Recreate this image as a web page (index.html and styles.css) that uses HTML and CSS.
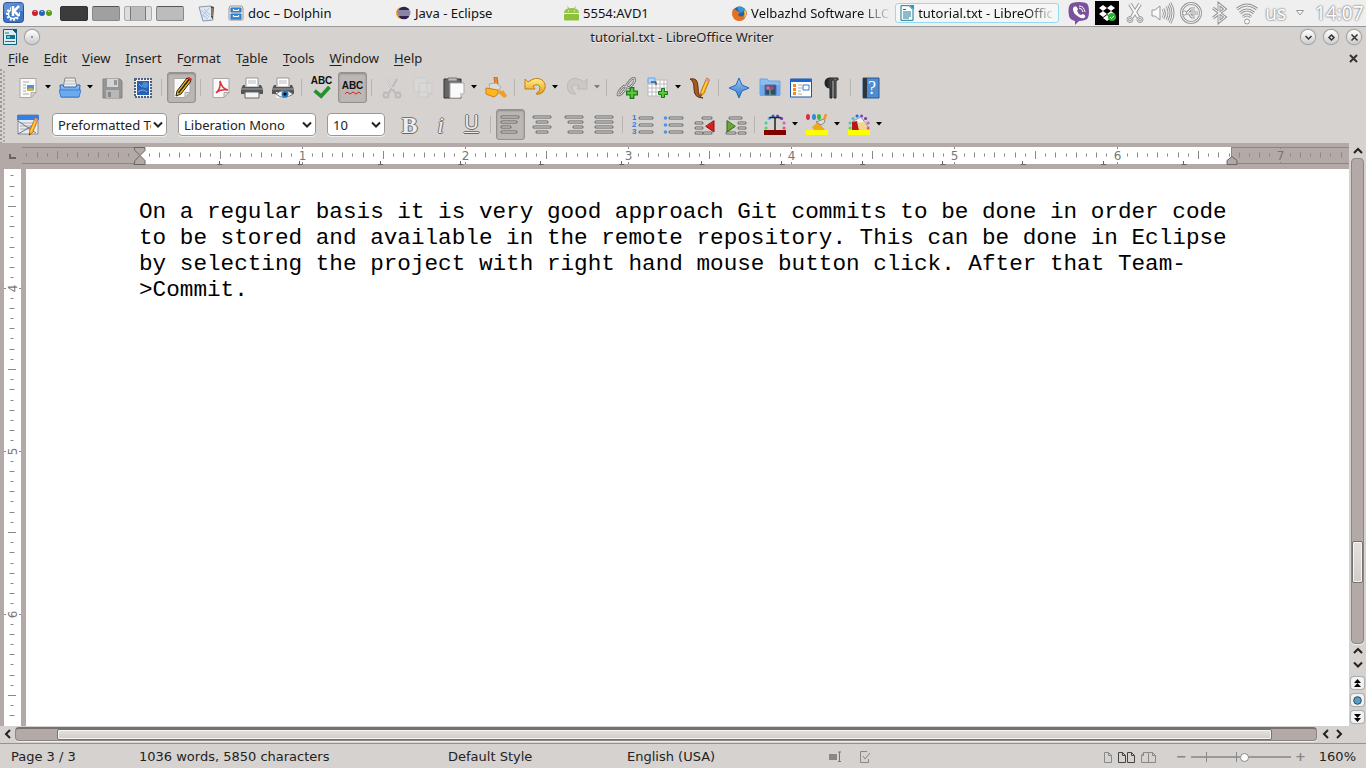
FILE: index.html
```
<!DOCTYPE html>
<html lang="en">
<head>
<meta charset="utf-8">
<title>tutorial.txt - LibreOffice Writer</title>
<link rel="stylesheet" href="styles.css">
</head>
<body>
<svg class="defs" aria-hidden="true">
  <defs>
    <linearGradient id="blue" x2="0" y2="1"><stop offset="0" stop-color="#9cc8f5"/><stop offset="1" stop-color="#2f76c8"/></linearGradient>
    <linearGradient id="gold" x2="0" y2="1"><stop offset="0" stop-color="#fff08a"/><stop offset="1" stop-color="#e89a10"/></linearGradient>
    <linearGradient id="dark" x2="1"><stop offset="0" stop-color="#111"/><stop offset="1" stop-color="#888"/></linearGradient>
    <symbol id="page" viewBox="0 0 22 22"><path d="M3 1.5h16v14l-5 5H3z" fill="#fafafa" stroke="#a8a8a8"/><path d="M14 20.5v-5h5z" fill="#d8d8d8" stroke="#aaa"/></symbol>
    <symbol id="wheel" viewBox="0 0 22 22"><g stroke-width="3" stroke-linecap="round"><path d="M2 14h.1" stroke="#58d850"/><path d="M2 9h.1" stroke="#38d0b0"/><path d="M5 4.500h.1" stroke="#50b8f0"/><path d="M9 2h.1" stroke="#2868e0"/><path d="M13.500 2h.1" stroke="#6050c8"/><path d="M17.500 4.500h.1" stroke="#7838b0"/><path d="M20 9h.1" stroke="#d060c0"/><path d="M20 14h.1" stroke="#e85070"/></g></symbol>
    <symbol id="plus" viewBox="0 0 10 10"><path d="M3.500.5h3v3h3v3h-3v3h-3v-3h-3v-3h3z" fill="#58c838" stroke="#187818"/></symbol>
    <symbol id="pencil" viewBox="0 0 12 22"><path d="M8 1l3 2-6 15-4 3 .5-5z" fill="#ffb414" stroke="#b87010"/><path d="M8 1l3 2-1 2.500-3-1.500z" fill="#f09090"/><path d="M1 21l.3-2 1.500.8z" fill="#222"/><path d="M8 5L3 17" stroke="#ffe070"/></symbol>
    <symbol id="down" viewBox="0 0 8 5"><path d="M1 0h6L4 3.500z"/></symbol>
    <symbol id="chev" viewBox="0 0 10 8"><path d="M1 1.500l4 4 4-4" fill="none" stroke="#222" stroke-width="2"/></symbol>
  </defs>
</svg>

<header class="panel">
  <button class="kmenu" aria-label="Application launcher"><svg width="21" height="22" viewBox="0 0 21 22"><rect x=".5" y=".5" width="20" height="20" rx="3" fill="#3b73c4" stroke="#2a5298"/><path d="M1 2q9-3 19 0v7Q10 9 1 12z" fill="#6d9cdc" opacity=".7"/><circle cx="10" cy="12" r="6" fill="none" stroke="#fff" stroke-width="2" stroke-dasharray="2 1.500"/><circle cx="10" cy="12" r="4.500" fill="none" stroke="#fff" stroke-width="1.500"/><path d="M8 3l8-1v13H8z" fill="#4c82cc"/><path d="M10 4v10M16 4l-5 5 5 5" fill="none" stroke="#fff" stroke-width="2.500"/></svg></button>
  <svg class="dots" width="20" height="8" viewBox="0 0 20 8"><circle cx="3" cy="4" r="3" fill="#c8202c"/><circle cx="10" cy="4" r="3" fill="#2864b4"/><circle cx="17" cy="4" r="3" fill="#5c9c10"/><path d="M2 2.500h2m5 0h2m5 0h2" stroke="#fff" opacity=".6"/></svg>
  <nav class="pager" aria-label="Desktops"><button class="desk current" aria-label="Desktop 1"></button><button class="desk" aria-label="Desktop 2"></button><button class="desk split" aria-label="Desktop 3"></button><button class="desk light" aria-label="Desktop 4"></button></nav>
  <svg class="notes" width="18" height="17" viewBox="0 0 18 17"><path d="M1 2l12-1 2 14-10 1z" fill="#dfe9f4" stroke="#8a96a4"/><path d="M3 5l8 7M3 9l7 5M6 4l6 6M11 3L4 12" stroke="#a9c4e4"/><path d="M13 1l3 1-1 12-2-2z" fill="#504840"/><path d="M14 3v8" stroke="#c0a468"/></svg>
  <nav class="tasks" aria-label="Windows">
    <button class="task"><svg width="16" height="16" viewBox="0 0 16 16"><path d="M2 1h12l1 2v11q0 1-1 1H2q-1 0-1-1V3z" fill="#eee" stroke="#999"/><path d="M3 3h10v4H3zM3 9h10v5H3z" fill="#3f8fe0" stroke="#2870b8"/><path d="M5.500 4v1.500h5V4M5.500 10v1.500h5V10" fill="none" stroke="#fff"/></svg><span>doc – Dolphin</span></button>
    <button class="task"><svg width="15" height="14" viewBox="0 0 15 14"><circle cx="6" cy="7" r="6" fill="#f7941e"/><circle cx="8" cy="7" r="6.300" fill="#2c2255"/><path d="M2 5h12M1.500 7h13M2 9h12" stroke="#e8e6f4"/></svg><span>Java - Eclipse</span></button>
    <button class="task"><svg width="15" height="15" viewBox="0 0 15 15"><path d="M0 7q0-5 7.500-5T15 7z" fill="#97c548"/><path d="M3.500.5l2 3M11.500.5l-2 3" stroke="#97c548"/><rect y="8" width="15" height="6.500" rx="1" fill="#8dc13c"/><path d="M4 5h1M10 5h1" stroke="#fff"/></svg><span>5554:AVD1</span></button>
    <button class="task fade"><svg width="15" height="15" viewBox="0 0 15 15"><circle cx="7.500" cy="7.500" r="7" fill="#2364a8"/><path d="M5 1q5-2 8 3l-4 3-3-3z" fill="#3b94d4"/><path d="M1 3q3 0 4 2l3 1-2 3q3 3 6 0 2-2 1.500-6 2 4 .5 7-2 5-6.500 5Q2 15 .5 10-.3 6 1 3z" fill="#e8701c"/><path d="M13 3q3 6-1 9 1-4 0-6z" fill="#ffc83c"/></svg><span>Velbazhd Software LLC</span></button>
    <button class="task active"><svg width="14" height="16" viewBox="0 0 14 16"><path d="M1 .7h8l4 4V15.300H1z" fill="#fff" stroke="#147a98"/><path d="M9 0h5v5z" fill="#18a0c8"/><path d="M3 4.500h3M3 7h8M3 9h8M3 11h8M3 13h6" stroke="#147a98"/></svg><span class="faded">tutorial.txt - LibreOffic</span></button>
  </nav>
  <div class="tray">
    <svg width="24" height="24" viewBox="0 0 24 24"><path d="M5 2Q12 0 19 2q3 1 3 9 0 7-4 8-3 1-6 1l-4 4v-4Q3 19 2 15 0 4 5 2z" fill="#7b519c"/><path d="M7 6q2-2 4 2l-1 2q1 3 4 4l2-1q4 2 1 4-2 1-5-1Q5 12 6 7z" fill="#fff"/><path d="M12 5q5 0 6 6M12 7q3 0 4 4" fill="none" stroke="#fff"/></svg>
    <svg width="24" height="24" viewBox="0 0 24 24"><path d="M0 0h24v24H0z"/><path d="M8 4l4 3-4 3-4-3zM16 4l4 3-4 3-4-3zM8 10l4 3-4 3-4-3zM16 10l4 3-4 3-4-3zM8 17l4-3 4 3-4 3z" fill="#fff"/><circle cx="17" cy="16" r="4" fill="#28b030"/><path d="M15 16l1.500 1.500L19 15" stroke="#fff" fill="none"/></svg>
    <svg class="ghost" width="24" height="24" viewBox="0 0 24 24"><path class="wide" d="M7 3l8 13M17 3L9 16"/><circle cx="7" cy="18.500" r="3"/><circle cx="17" cy="18.500" r="3"/><circle class="hole" cx="7" cy="18.500" r="1.500"/><circle class="hole" cx="17" cy="18.500" r="1.500"/><path class="in wide-in" d="M7 3l8 13M17 3L9 16"/></svg>
    <svg class="ghost" width="24" height="24" viewBox="0 0 24 24"><path class="thin" d="M1 9h3l5-4v14l-5-4H1z"/><path d="M12 8q3 5 0 9M16 5q4 7 0 14M19 2q6 10 0 20"/><path class="in" d="M12 8q3 5 0 9M16 5q4 7 0 14M19 2q6 10 0 20"/></svg>
    <svg class="ghost" width="24" height="24" viewBox="0 0 24 24"><path d="M2.500 12a9.500 9.500 0 0 1 19 0a9.500 9.500 0 0 1-19 0z"/><path class="in" d="M2.500 12a9.500 9.500 0 0 1 19 0a9.500 9.500 0 0 1-19 0z"/><path d="M5 12h14M8 12l4-4h4M10 12l3 4h3"/><path class="in" d="M5 12h14M8 12l4-4h4M10 12l3 4h3"/><circle cx="5.500" cy="12" r="2"/></svg>
    <svg class="ghost" width="24" height="24" viewBox="0 0 24 24"><path d="M6 7l12 9-6 5V3l6 5-12 9"/><path class="in" d="M6 7l12 9-6 5V3l6 5-12 9"/></svg>
    <svg class="ghost" width="24" height="24" viewBox="0 0 24 24"><path d="M2 8q10-8 20 0M5 12q7-6 14 0M8 16q4-4 8 0"/><path class="in" d="M2 8q10-8 20 0M5 12q7-6 14 0M8 16q4-4 8 0"/><circle cx="12" cy="20.500" r="2.500"/></svg>
    <span class="layout">us</span>
    <svg class="ghost tri" width="10" height="8" viewBox="0 0 10 8"><path class="thin" d="M1.500 1.500h7L5 6z"/></svg>
    <time class="clock">14:07</time>
  </div>
</header>

<div class="titlebar">
  <div class="side"><svg width="14" height="16" viewBox="0 0 14 16"><path d="M.5.500h9l4 4v11H.5z" fill="#d8eef4" stroke="#10607c"/><path d="M9 0h5v5z" fill="#0c587c"/><path d="M2 4h4M2 12.500h10" stroke="#147a98"/><path d="M3 6h9v4H3z" fill="#18708c"/><path d="M4 8h3" stroke="#fff"/></svg><button class="round" aria-label="On all desktops"><svg width="4" height="4"><circle cx="2" cy="2" r="1" fill="#777"/></svg></button></div>
  <h1>tutorial.txt - LibreOffice Writer</h1>
  <div class="side end"><button class="round" aria-label="Minimize"><svg width="9" height="9" viewBox="0 0 9 9"><path d="M1.500 3l3 3 3-3"/></svg></button><button class="round" aria-label="Maximize"><svg width="9" height="9" viewBox="0 0 9 9"><path d="M4.500 2l2.500 2.500L4.500 7 2 4.500z"/></svg></button><button class="round" aria-label="Close"><svg width="9" height="9" viewBox="0 0 9 9"><path d="M1.500 1.500l6 6m0-6l-6 6"/></svg></button></div>
</div>

<nav class="menubar" aria-label="Menu">
  <button><u>F</u>ile</button><button><u>E</u>dit</button><button><u>V</u>iew</button><button><u>I</u>nsert</button><button>F<u>o</u>rmat</button><button>T<u>a</u>ble</button><button><u>T</u>ools</button><button><u>W</u>indow</button><button><u>H</u>elp</button>
  <button class="closedoc" aria-label="Close document"><svg width="9" height="9" viewBox="0 0 9 9"><path d="M1 1l7 7m0-7L1 8" stroke="#333" stroke-width="2"/></svg></button>
</nav>

<div class="toolbar" role="toolbar" aria-label="Standard">
  <button class="tool" aria-label="New"><svg viewBox="0 0 22 22"><use href="#page"/><path d="M6 5h6M6 8h3M6 11h3M6 14h3M6 17h6" stroke="#aaa"/><path d="M10 8h7v6h-7z" fill="#4c94d8"/><path d="M10 12l4-1 3 1v2h-7z" fill="#d8b040"/></svg></button><button class="arrow" aria-label="New options"><svg><use href="#down"/></svg></button>
  <button class="tool" aria-label="Open"><svg viewBox="0 0 22 22"><path d="M4 11L6 1h10l2 10z" fill="#eee" stroke="#888"/><path d="M6 4h10M5 7h12" stroke="#bbb"/><path d="M1 8h3l1 2h12l1-2h3l-1 12H2z" fill="url(#blue)" stroke="#2868b8"/><path d="M0 13h22l-2 7H2z" fill="#6caaf0" stroke="#3c80d0"/></svg></button><button class="arrow" aria-label="Open options"><svg><use href="#down"/></svg></button>
  <button class="tool" aria-label="Save"><svg viewBox="0 0 22 22"><path d="M2 2h17l2 2v17H2z" fill="#959595" stroke="#858585"/><path d="M6 2h11v8H6z" fill="#d4d4d4"/><path d="M13 3h3v5h-3z" fill="#959595"/><path d="M5 13h13v8H5z" fill="#b8b8b8"/><path d="M7 15h3v5H7z" fill="#888"/></svg></button>
  <button class="tool" aria-label="Document as e-mail"><svg viewBox="0 0 22 22"><path d="M3 2h16v18H3z" fill="#f6f6f6" stroke="#506080" stroke-width="2" stroke-dasharray="2 1"/><path d="M5 4h12v14H5z" fill="#2860b4"/><circle cx="13" cy="8" r="3" fill="#4c88d4"/><path d="M6 15q4-4 9 0M7 7l3 3" stroke="#7caee8" fill="none"/></svg></button>
  <i class="sep"></i>
  <button class="tool on" aria-label="Edit mode"><svg viewBox="0 0 22 22"><use href="#page"/><path d="M16 1l4 3-10 13-5 2 1-5z" fill="#f4b414" stroke="#222"/><path d="M18 2.500L7.500 16" stroke="#222" stroke-width="1.500"/><path d="M16 1l4 3 1-2-3-2z" fill="#e02020"/></svg></button>
  <i class="sep"></i>
  <button class="tool" aria-label="Export as PDF"><svg viewBox="0 0 22 22"><use href="#page"/><path d="M6 16q5-4 4-12 2 8 8 9-8-1-12 3z" fill="none" stroke="#e03038" stroke-width="1.500"/></svg></button>
  <button class="tool" aria-label="Print"><svg viewBox="0 0 22 22"><path d="M5 1h12v9H5z" fill="#fff" stroke="#999"/><path d="M7 4h8M7 6h8" stroke="#bbb"/><path d="M2 8h2v2h14V8h2l2 4v5H0v-5z" fill="#555"/><path d="M0 12h22" stroke="#aaa"/><path d="M4 15h14v6H4z" fill="#f4f4f4" stroke="#666"/></svg></button>
  <button class="tool" aria-label="Print preview"><svg viewBox="0 0 22 22"><path d="M5 1h12v9H5z" fill="#fff" stroke="#999"/><path d="M7 4h8M7 6h8" stroke="#bbb"/><path d="M2 8h2v2h14V8h2l2 4v5H0v-5z" fill="#555"/><path d="M0 12h22" stroke="#aaa"/><path d="M4 15h14v6H4z" fill="#eee"/><path d="M4 17q8-7 17 0-9 7-17 0z" fill="#fff" stroke="#777"/><circle cx="13" cy="17" r="3.500" fill="#2878c0"/><circle cx="13" cy="17" r="1.500"/></svg></button>
  <i class="sep"></i>
  <button class="tool abc" aria-label="Spelling"><b>ABC</b><svg viewBox="0 0 22 14"><path d="M3 5l7 6L19 1" fill="none" stroke="#22922c" stroke-width="4"/></svg></button>
  <button class="tool on abc" aria-label="AutoSpellcheck"><b>ABC</b><svg class="wave" viewBox="0 0 18 4"><path d="M1 3l2-2 3 2 3-2 3 2 3-2 2 2" fill="none" stroke="#e02020"/></svg></button>
  <i class="sep"></i>
  <button class="tool off" aria-label="Cut"><svg viewBox="0 0 22 22"><path d="M6 2l8 14M16 2L8 16" stroke="#aaa" stroke-width="2"/><path d="M6 2l6 10" stroke="#eee"/><circle cx="5" cy="18" r="2.500" fill="none" stroke="#aaa" stroke-width="2"/><circle cx="17" cy="18" r="2.500" fill="none" stroke="#aaa" stroke-width="2"/></svg></button>
  <button class="tool off" aria-label="Copy"><svg viewBox="0 0 22 22"><path d="M2 1h13v14H2zM7 6h13v10l-4 4H7z" fill="#ddd" stroke="#c4c4c4"/><path d="M16 20v-4h4" fill="none" stroke="#bbb"/></svg></button>
  <button class="tool" aria-label="Paste"><svg viewBox="0 0 22 22"><path d="M1 2h17v19H1z" fill="#666" stroke="#333"/><path d="M5 1h9v3H5z" fill="#bbb" stroke="#777"/><path d="M7 6h14v10l-4 5H7z" fill="#fafafa" stroke="#aaa"/><path d="M17 21v-5h4z" fill="#ccc"/></svg></button><button class="arrow" aria-label="Paste options"><svg><use href="#down"/></svg></button>
  <button class="tool" aria-label="Clone formatting"><svg viewBox="0 0 22 22"><path d="M9 0l3 0 1 7-3 1z" fill="#f88820" stroke="#c86810"/><path d="M4 7l7-1 5 4-3 4-8-2z" fill="#ddd" stroke="#aaa"/><path d="M1 11l12 2v4l-4 3-8-3z" fill="#ffb81c" stroke="#d08010"/><path d="M14 14l6 6M17 14l4 6" stroke="#f0a020" stroke-width="3"/></svg></button>
  <i class="sep"></i>
  <button class="tool" aria-label="Undo"><svg viewBox="0 0 22 22"><path d="M1 2l3 3Q12-1 18 3q6 5 1 12-3 3-7 2 5-4 4-7-2-4-7-1l2 3H1z" fill="url(#gold)" stroke="#c08010"/></svg></button><button class="arrow" aria-label="Undo options"><svg><use href="#down"/></svg></button>
  <button class="tool off" aria-label="Redo"><svg viewBox="0 0 22 22"><path d="M21 2l-3 3Q10-1 4 3q-5 5-1 12 3 3 7 2-5-4-4-7 2-4 7-1l-2 3h10z" fill="#c4c4c4" stroke="#a8a8a8"/></svg></button><button class="arrow off" aria-label="Redo options"><svg><use href="#down"/></svg></button>
  <i class="sep"></i>
  <button class="tool" aria-label="Hyperlink"><svg viewBox="0 0 22 22"><g fill="none"><path d="M10 9q5-8 8-8 3 3-5 10zM2 18q-1-3 6-9 4 0 0 5-4 5-6 4z" stroke="#777" stroke-width="2.500"/><path d="M10 9q5-8 8-8 3 3-5 10zM2 18q-1-3 6-9 4 0 0 5-4 5-6 4z" stroke="#ddd"/></g><use href="#plus" x="10" y="10" width="12" height="12"/></svg></button>
  <button class="tool" aria-label="Table"><svg viewBox="0 0 22 22"><path d="M1 3h19v16H1z" fill="#fff"/><path d="M1 7h19M1 11h19M1 15h19M5 3v16M9 3v16M13 3v16M17 3v16M1 3h19v16H1z" stroke="#bbb" fill="none"/><path d="M1 1h7v5H1z" fill="#b4d4fc" stroke="#68a8f4"/><path d="M4 5h5v3" fill="none" stroke="#222"/><use href="#plus" x="11" y="11" width="10" height="10"/></svg></button><button class="arrow" aria-label="Table options"><svg><use href="#down"/></svg></button>
  <button class="tool" aria-label="Show draw functions"><svg viewBox="0 0 22 22"><path d="M1 2q8-2 8 8t5 11Q5 21 5 12 5 4 1 2z" fill="#a85820" stroke="#603010"/><use href="#pencil" x="10" width="12" height="20"/></svg></button>
  <i class="sep"></i>
  <button class="tool" aria-label="Navigator"><svg viewBox="0 0 22 22"><path d="M11 1l3 7 7 3-7 3-3 7-3-7-7-3 7-3z" fill="url(#blue)" stroke="#2868b8"/></svg></button>
  <button class="tool" aria-label="Gallery"><svg viewBox="0 0 22 22"><path d="M1 2h7l2 2h11v14H1z" fill="#8cbcf0" stroke="#6ca4e0"/><path d="M1 8h20v11H1z" fill="#6caaec"/><path d="M6 8h11v10H6z" fill="#384870" stroke="#4878b8"/><path d="M11 12v6" stroke="#58a858" stroke-width="1.500"/><circle cx="9" cy="11" r="2" fill="#d07080"/><circle cx="13" cy="11" r="2" fill="#b04880"/></svg></button>
  <button class="tool" aria-label="Data sources"><svg viewBox="0 0 22 22"><path d="M.5 2h21v18H.5z" fill="#fff" stroke="#1854b0"/><path d="M0 2h22v3H0z" fill="#1c64d0"/><path d="M3 7h3v3H3zM3 11h3v3H3zM3 15h3v3H3z" fill="#f08c18"/><path d="M8 8h4M8 11h4M8 14h3M8 17h4" stroke="#aaa"/><path d="M13 8h6v5h-6z" fill="#fff" stroke="#3878d0"/></svg></button>
  <button class="tool" aria-label="Nonprinting characters"><svg viewBox="0 0 22 22"><path d="M17 1v2h-2v18h-2V3h-2v18H9V11Q4 11 4 6T9 1z" fill="url(#dark)" stroke="#222"/></svg></button>
  <i class="sep"></i>
  <button class="tool help" aria-label="Help"><svg viewBox="0 0 22 22"><path d="M3 1h16v20H3z" fill="#4c8cd0" stroke="#285890"/><path d="M3 1h4v20H3z" fill="#30353c"/></svg><em>?</em></button>
</div>

<div class="toolbar" role="toolbar" aria-label="Formatting">
  <button class="tool" aria-label="Styles and formatting"><svg viewBox="0 0 22 22"><path d="M1 1h20v19H1z" fill="#e8ecf0" stroke="#889"/><path d="M0 1h22v5H0z" fill="#3080e8"/><path d="M3 9h16M3 12h16M3 15h13" stroke="#aab"/><path d="M1 20l14-8M1 7l18 12" stroke="#678"/><use href="#pencil" x="11" y="3" width="11" height="19"/></svg></button>
  <label class="combo style"><select aria-label="Paragraph style"><option>Preformatted Text</option></select><svg width="10" height="8"><use href="#chev"/></svg></label>
  <label class="combo font"><select aria-label="Font name"><option>Liberation Mono</option></select><svg width="10" height="8"><use href="#chev"/></svg></label>
  <label class="combo size"><select aria-label="Font size"><option>10</option></select><svg width="10" height="8"><use href="#chev"/></svg></label>
  <button class="tool glyph bold" aria-label="Bold">B</button><button class="tool glyph ital" aria-label="Italic">i</button><button class="tool glyph under" aria-label="Underline">U</button>
  <i class="sep"></i>
  <button class="tool on" aria-label="Align left"><svg class="bars" viewBox="0 0 22 22"><path d="M2 3h16M2 8h14M2 13h8M2 18h14"/><path class="in" d="M2 3h16M2 8h14M2 13h8M2 18h14"/></svg></button>
  <button class="tool" aria-label="Center"><svg class="bars" viewBox="0 0 22 22"><path d="M3 3h16M6 8h10M3 13h16M6 18h10"/><path class="in" d="M3 3h16M6 8h10M3 13h16M6 18h10"/></svg></button>
  <button class="tool" aria-label="Align right"><svg class="bars" viewBox="0 0 22 22"><path d="M4 3h16M7 8h13M12 13h8M7 18h13"/><path class="in" d="M4 3h16M7 8h13M12 13h8M7 18h13"/></svg></button>
  <button class="tool" aria-label="Justify"><svg class="bars" viewBox="0 0 22 22"><path d="M3 3h16M3 8h16M3 13h16M3 18h16"/><path class="in" d="M3 3h16M3 8h16M3 13h16M3 18h16"/></svg></button>
  <i class="sep"></i>
  <button class="tool nums" aria-label="Numbered list"><span>1<br>2<br>3</span><svg class="bars" viewBox="0 0 22 22"><path d="M8 4h12M8 11h12M8 18h12"/><path class="in" d="M8 4h12M8 11h12M8 18h12"/></svg></button>
  <button class="tool" aria-label="Bulleted list"><svg class="bars" viewBox="0 0 22 22"><path d="M7 4h12M7 11h12M7 18h12"/><path class="in" d="M7 4h12M7 11h12M7 18h12"/><g fill="#4c94e8"><circle cx="2.500" cy="4" r="1.800"/><circle cx="2.500" cy="11" r="1.800"/><circle cx="2.500" cy="18" r="1.800"/></g></svg></button>
  <button class="tool" aria-label="Decrease indent"><svg class="bars" viewBox="0 0 22 22"><path d="M9 4h8M2 9h6M2 14h6M2 19h6M10 19h7"/><path class="in" d="M9 4h8M2 9h6M2 14h6M2 19h6M10 19h7"/><path class="tip" d="M20 7v11l-8-5.500z" fill="#d82020" stroke="#901010"/></svg></button>
  <button class="tool" aria-label="Increase indent"><svg class="bars" viewBox="0 0 22 22"><path d="M5 4h11M14 9h6M14 14h6M14 19h6M2 19h8"/><path class="in" d="M5 4h11M14 9h6M14 14h6M14 19h6M2 19h8"/><path class="tip" d="M2 7v11l8-5.500z" fill="#68a838" stroke="#306810"/></svg></button>
  <i class="sep"></i>
  <button class="tool" aria-label="Font color"><svg viewBox="0 0 22 22"><use href="#wheel"/><path d="M6 4.500V3.500h10v1M11 4v12" fill="none" stroke="#222" stroke-width="1.500"/><path d="M0 16h22v5H0z" fill="#800000"/></svg></button><button class="arrow" aria-label="Font color options"><svg><use href="#down"/></svg></button>
  <button class="tool" aria-label="Highlighting"><svg viewBox="0 0 22 22"><path d="M6 13l6-5 7 8H8z" fill="#f4a818"/><path d="M10 8l8-3 1 3-4 3z" fill="#ddd" stroke="#888"/><path d="M18 6l2-6" stroke="#f89030" stroke-width="2.500"/><ellipse cx="2" cy="3" rx="2" ry="3" fill="#d83040"/><ellipse cx="8" cy="3" rx="2" ry="3" fill="#3888d8"/><ellipse cx="13" cy="3" rx="2" ry="3" fill="#40b838"/><path d="M0 16h22v5H0z" fill="#ff0"/></svg></button><button class="arrow" aria-label="Highlighting options"><svg><use href="#down"/></svg></button>
  <button class="tool" aria-label="Background color"><svg viewBox="0 0 22 22"><use href="#wheel"/><path d="M5 7l8-4 7 10-8 4-7-3z" fill="#eee" stroke="#999"/><path d="M4 8l5-1 2 9H4z" fill="#b81818"/><path d="M10 9l7-1 2 8h-8z" fill="#f4d488"/><path d="M0 16h22v5H0z" fill="#ff0"/></svg></button><button class="arrow" aria-label="Background color options"><svg><use href="#down"/></svg></button>
</div>

<main class="work">
  <div class="canvas">
    <div class="hrow"><span class="corner"></span><svg class="hruler" id="hruler"></svg></div>
    <div class="below">
      <svg class="vruler" id="vruler"></svg>
      <article class="sheet"><p>On a regular basis it is very good approach Git commits to be done in order code to be stored and available in the remote repository. This can be done in Eclipse by selecting the project with right hand mouse button click. After that Team-<wbr>&gt;Commit.</p></article>
    </div>
  </div>
  <aside class="vscroll">
    <button aria-label="Scroll up"><svg width="10" height="8" viewBox="0 0 10 8"><path d="M1 6l4-4 4 4" fill="none" stroke="#222" stroke-width="2"/></svg></button>
    <div class="track"><i class="before"></i><i class="thumb"></i><i class="after"></i></div>
    <button aria-label="Scroll up a line"><svg width="10" height="8" viewBox="0 0 10 8"><path d="M1 6l4-4 4 4" fill="none" stroke="#222" stroke-width="2"/></svg></button>
    <button aria-label="Scroll down"><svg width="10" height="8"><use href="#chev"/></svg></button>
    <div class="jump"><button aria-label="Previous page"><svg width="9" height="9" viewBox="0 0 9 9"><path d="M4.500 0L8 4H1zM4.500 4L8 8H1z"/></svg></button><button aria-label="Navigation"><svg width="9" height="9" viewBox="0 0 9 9"><circle cx="4.500" cy="4.500" r="3.800" fill="#5c9cc4" stroke="#204868"/></svg></button><button aria-label="Next page"><svg width="9" height="9" viewBox="0 0 9 9"><path d="M1 1h7L4.500 5zM1 5h7L4.500 9z"/></svg></button></div>
  </aside>
</main>

<div class="hscroll">
  <button aria-label="Scroll left"><svg width="8" height="10" viewBox="0 0 8 10"><path d="M6 1L2 5l4 4"/></svg></button>
  <div class="track"><i class="before"></i><i class="thumb"></i><i class="after"></i></div>
  <button aria-label="Scroll one left"><svg width="8" height="10" viewBox="0 0 8 10"><path d="M6 1L2 5l4 4"/></svg></button>
  <button aria-label="Scroll right"><svg width="8" height="10" viewBox="0 0 8 10"><path d="M2 1l4 4-4 4"/></svg></button>
</div>

<footer class="status">
  <span class="pg">Page 3 / 3</span><span class="words">1036 words, 5850 characters</span><span class="sty">Default Style</span><span class="lang">English (USA)</span>
  <svg class="ins" width="12" height="12" viewBox="0 0 12 12"><path d="M0 3h8v6H0z" fill="#888"/><path d="M9 1h3M9 10.500h3M10.500 1v9" stroke="#777"/></svg>
  <svg class="sig" width="12" height="12" viewBox="0 0 12 12"><path d="M8 .5H1.500v11h8V8M4 5l2 3 5-6" fill="none" stroke="#888"/></svg>
  <div class="views"><button aria-label="Single page"><svg width="9" height="11" viewBox="0 0 9 11"><path d="M1.500.500h4l3 3v7h-7zM5.500.500v3h3"/></svg></button><button class="sel" aria-label="Multiple pages"><svg width="18" height="11" viewBox="0 0 18 11"><path d="M1.500.500h4l3 3v7h-7zM5.500.500v3h3M10.500.500h4l3 3v7h-7zM14.500.500v3h3"/></svg></button><button aria-label="Book view"><svg width="16" height="11" viewBox="0 0 16 11"><path d="M8.500.500h-5l-2 3v7h7zM8.500.500h4l3 3v7h-7zM3.500.500v3h-2M12.500.500v3h3"/></svg></button></div>
  <div class="zoom"><button aria-label="Zoom out">−</button><input type="range" min="0" max="100" value="54" aria-label="Zoom"><button aria-label="Zoom in">+</button></div>
  <span class="pct">160%</span>
</footer>
<script src="ruler.js"></script>
</body>
</html>
```
FILE: styles.css
```
* { box-sizing: border-box; }
body { margin: 0; height: 100vh; display: flex; flex-direction: column; overflow: hidden; background: #d6d2d0; color: #222; font: 13px/16px "Noto Sans", "Open Sans", sans-serif; }
button { padding: 0; border: 0; background: none; color: inherit; font: inherit; }
svg { display: block; flex: none; }
.defs { position: absolute; width: 0; height: 0; }

.panel { flex: none; display: flex; align-items: center; height: 27px; padding-left: 3px; background: #efefef; border-bottom: 1px solid #999; white-space: nowrap; color: #111; }
.dots { margin: 0 8px; }
.pager { display: flex; gap: 4px; }
.desk { width: 28px; height: 15px; border: 1px solid #888; border-top-color: #555; border-radius: 2px; background: #a0a0a0; }
.desk.current { background: #3c3c3c; border-color: #333; }
.desk.light { background: #bcbcbc; }
.desk.split { border-color: #aaa; background: linear-gradient(90deg, #ddd 5px, #777 5px 6px, #bbb 6px 20px, #777 20px 21px, #ddd 21px); }
.notes { margin: 0 7px 0 14px; }
.tasks { flex: 1; display: grid; grid-template-columns: repeat(5, minmax(0, 1fr)); gap: 4px; }
.task { display: flex; align-items: center; gap: 4px; height: 20px; padding: 0 4px; border: 1px solid transparent; border-radius: 3px; }
.task.fade span, .faded { -webkit-mask-image: linear-gradient(90deg, #000 80%, transparent 102%); mask-image: linear-gradient(90deg, #000 80%, transparent 102%); }
.task.active { border-color: #93dcf0; background: #f6f6f6; }
.tray { display: flex; align-items: center; gap: 4px; margin-left: 8px; }
.ghost { fill: none; stroke: #999; stroke-width: 3; }
.ghost .in { stroke: #fafafa; stroke-width: 1; }
.ghost .wide { stroke-width: 4; }
.ghost .wide-in { stroke-width: 2; }
.ghost circle, .ghost .thin { stroke-width: 1; fill: #fafafa; }
.ghost .hole { fill: #e4e4e4; }
.layout, .clock { color: #fff; text-shadow: 0 0 2px #777, 0 0 2px #888; font-size: 19px; }
.layout { margin: 0 5px 0 2px; }
.tri { margin-right: 6px; }
.clock { width: 51px; }

.titlebar { flex: none; display: flex; align-items: center; justify-content: space-between; height: 20px; padding: 0 5px 0 3px; }
.titlebar h1 { margin: 0; font-size: 13px; font-weight: 400; text-shadow: 0 1px #eee; }
.side { flex: 1; display: flex; align-items: center; gap: 8px; }
.side.end { justify-content: flex-end; }
.round { display: flex; align-items: center; justify-content: center; width: 14px; height: 14px; border-radius: 50%; background: linear-gradient(#fff, #ccc); box-shadow: 0 0 1px 1px #999; }
.side.end { gap: 9px; }
.round path { fill: none; stroke: #333; stroke-width: 1.5; }
.menubar { flex: none; display: flex; align-items: center; gap: 15px; height: 22px; padding: 0 8px; }
.menubar u { text-underline-offset: 2px; }
.closedoc { margin-left: auto; }

.toolbar { flex: none; display: flex; align-items: center; gap: 2px; height: 37px; padding-left: 13px; background: radial-gradient(circle at 1px 1px, #999 1px, transparent 1px) 0 0 / 4px 4px repeat-y, radial-gradient(circle at 1px 3px, #aaa 1px, transparent 1px) 3px 0 / 4px 4px repeat-y; }
.tool { position: relative; flex: none; display: flex; align-items: center; justify-content: center; width: 29px; height: 31px; border-radius: 3px; }
.tool > svg { width: 22px; height: 22px; }
.tool.on { background: #bdb7b4; border: 1px solid #96918e; box-shadow: inset 0 1px 2px #888; }
.tool.off { opacity: .6; }
.arrow { flex: none; width: 9px; height: 31px; display: flex; align-items: center; }
.arrow svg { width: 8px; height: 5px; }
.arrow.off { opacity: .4; }
.sep { flex: none; width: 6px; height: 17px; background: linear-gradient(#b8b4b2, #b8b4b2) 2px 0 / 1px 100% no-repeat; }
.abc { flex-direction: column; }
.abc b { font: 700 10px/10px "Liberation Sans", sans-serif; color: #111; }
.abc > svg { height: 13px; }
.abc > .wave { width: 18px; height: 4px; }
.help em { position: absolute; left: 12px; top: 6px; font: 18px/20px "Liberation Serif", serif; color: #fff; }
.combo { position: relative; flex: none; margin-right: 9px; }
.combo.style { width: 115px; margin-left: 8px; }
.combo.font { width: 138px; }
.combo.size { width: 58px; margin-right: 8px; }
.combo select { appearance: none; display: block; width: 100%; height: 23px; padding: 0 15px 0 5px; border: 1px solid #999; border-radius: 4px; background: #fff; color: #222; font: inherit; box-shadow: 0 1px #eee; }
.combo svg { position: absolute; right: 4px; top: 8px; pointer-events: none; }
.glyph { font: 24px/26px "Liberation Serif", serif; color: #eee; text-shadow: 1px 0 #666, -1px 0 #777, 0 1px #666, 0 -1px #777; }
.bold { font-weight: 700; }
.ital { font-style: italic; }
.under { font-size: 20px; line-height: 20px; font-family: "Noto Sans", sans-serif; padding-bottom: 5px; text-decoration: underline 1px #eee; text-underline-offset: 3px; }
.bars { fill: none; stroke: #606060; stroke-width: 3; stroke-linecap: round; }
.bars .in { stroke: #eee; stroke-width: 1; }
.bars .tip { stroke-width: 1; }
.bars g { stroke: none; }
.nums span { position: absolute; left: 4px; top: 5px; font: 700 8px/7px "Liberation Sans", sans-serif; color: #2c7ce0; }

.work { flex: 1; min-height: 0; display: flex; }
.canvas { flex: 1; min-width: 0; display: flex; flex-direction: column; background: #b3aaa7; }
.hrow { flex: none; display: flex; height: 26px; padding-top: 4px; }
.corner { flex: none; width: 7px; height: 5px; margin: 7px 6px 0 9px; border: solid #666; border-width: 0 0 2px 2px; }
.hruler { flex: 1; min-width: 0; height: 18px; }
.below { flex: 1; min-height: 0; display: flex; padding-left: 4px; }
.vruler { width: 17px; height: 100%; margin-right: 5px; background: #fff; }
.sheet { flex: 1; background: #fff; }
.sheet p { max-width: 1092px; margin: 30px 0 0 113px; font: 17pt/26px "Liberation Mono", monospace; color: #000; }
#hruler text, #vruler text { font: 12px "DejaVu Sans", sans-serif; fill: #777; text-anchor: middle; }

.vscroll { flex: none; width: 17px; display: flex; flex-direction: column; align-items: center; padding: 1px 0 3px; }
.vscroll > button { flex: none; height: 14px; }
.track { display: flex; background: #b3aaa7; border: 1px solid #8d8784; border-radius: 4px; box-shadow: 0 1px #eee; }
.thumb { border: 1px solid #77726f; border-radius: 2px; background: linear-gradient(#e4e1df, #cfccca); box-shadow: inset 0 0 0 1px #f4f4f4; }
.vscroll .track { flex: 1; width: 13px; flex-direction: column; }
.vscroll .before { flex: 385; }
.vscroll .thumb { flex: 41; }
.vscroll .after { flex: 60; }
.jump { flex: none; display: flex; flex-direction: column; gap: 5px; margin-top: 5px; }
.jump button { display: flex; align-items: center; justify-content: center; width: 13px; height: 12px; border-radius: 3px; background: #f2f2f2; box-shadow: 0 0 1px 1px #aaa; }

.hscroll { flex: none; display: flex; align-items: center; gap: 5px; height: 17px; padding: 0 23px 1px 4px; }
.hscroll path { fill: none; stroke: #222; stroke-width: 2; }
.hscroll .track { flex: 1; height: 14px; margin-left: -2px; border-top: 2px solid #77706c; }
.hscroll .before { flex: 41; }
.hscroll .thumb { flex: 1218; }
.hscroll .after { flex: 44; }

.status { flex: none; display: flex; align-items: center; height: 25px; padding: 2px 10px 0 11px; border-top: 1px solid #96918e; font: 13px/16px "DejaVu Sans", sans-serif; white-space: nowrap; }
.pg { width: 128px; }
.words { width: 309px; }
.sty { width: 179px; }
.lang { width: 202px; }
.sig { margin-left: 18px; }
.views { display: flex; gap: 5px; margin-left: auto; }
.views path { fill: none; stroke: #888; }
.views .sel path { stroke: #444; }
.zoom { display: flex; align-items: center; gap: 4px; margin: 0 13px 0 20px; color: #888; font-weight: 700; }
.zoom input { appearance: none; width: 100px; height: 10px; margin: 0; background: linear-gradient(#888, #888) 15px 0 / 1px 10px no-repeat, linear-gradient(#888, #888) 45px 0 / 1px 10px no-repeat, linear-gradient(#999, #999) 0 4px / 100% 2px no-repeat; }
.zoom input::-webkit-slider-thumb { appearance: none; width: 9px; height: 9px; border: 1px solid #888; border-radius: 50%; background: #fff; }
```
FILE: ruler.js
```
const INCH = 163;
const TAB = 80.35;
const step = INCH / 16;
const line = (x1, y1, x2, y2, c = '#888') => `<path d="M${x1} ${y1}L${x2} ${y2}" stroke="${c}"/>`;
const snap = v => Math.floor(v) + 0.5;

function drawHorizontal() {
  const el = document.getElementById('hruler');
  const width = el.clientWidth, zero = 117, end = 1209;
  let s = `<rect x="${zero}" y="0" width="${end - zero}" height="17" fill="#fff"/>`;
  s += line(0, 0.5, zero, 0.5) + line(0, 16.5, zero, 16.5) + line(end, 0.5, width, 0.5) + line(end, 16.5, width, 16.5) + line(end + 0.5, 0, end + 0.5, 17);
  for (let i = -11; zero + i * step < width; i++) {
    const x = snap(zero + i * step);
    if (i === 0) continue;
    if (i > 0 && i % 16 === 0) {
      s += line(x, 0, x, 2) + line(x, 15, x, 17) + `<text x="${x}" y="13">${i / 16}</text>`;
    } else {
      const h = i % 8 === 0 ? 4 : i % 2 === 0 ? 2.5 : 1.5;
      s += line(x, 8 - h, x, 8 + h);
    }
  }
  for (let x = zero + TAB; x < end; x += TAB) {
    s += line(snap(x), 14, snap(x), 17, '#666') + line(x - 2, 17.5, x + 3, 17.5, '#666');
  }
  s += `<path d="M${zero - 5} .5h11v3l-5 5-5-5zM${zero - 5} 17.5h11v-4l-5-5-5 5zM${end - 4} 17.5h10v-4l-5-4-5 4z" fill="#b3aaa7" stroke="#666"/>`;
  el.innerHTML = s;
}

function drawVertical() {
  const el = document.getElementById('vruler');
  const height = el.clientHeight, zero = 119 - 4 * INCH;
  let s = '';
  for (let i = 53; zero + i * step < height; i++) {
    const y = snap(zero + i * step);
    if (i % 16 === 0) {
      s += line(0, y, 2, y) + line(15, y, 17, y) + `<text transform="translate(13 ${y}) rotate(-90)">${i / 16}</text>`;
    } else {
      const h = i % 8 === 0 ? 4 : i % 2 === 0 ? 2.5 : 1.5;
      s += line(8 - h, y, 8 + h, y);
    }
  }
  el.innerHTML = s;
}

function draw() { drawHorizontal(); drawVertical(); }
draw();
addEventListener('resize', draw);
```
